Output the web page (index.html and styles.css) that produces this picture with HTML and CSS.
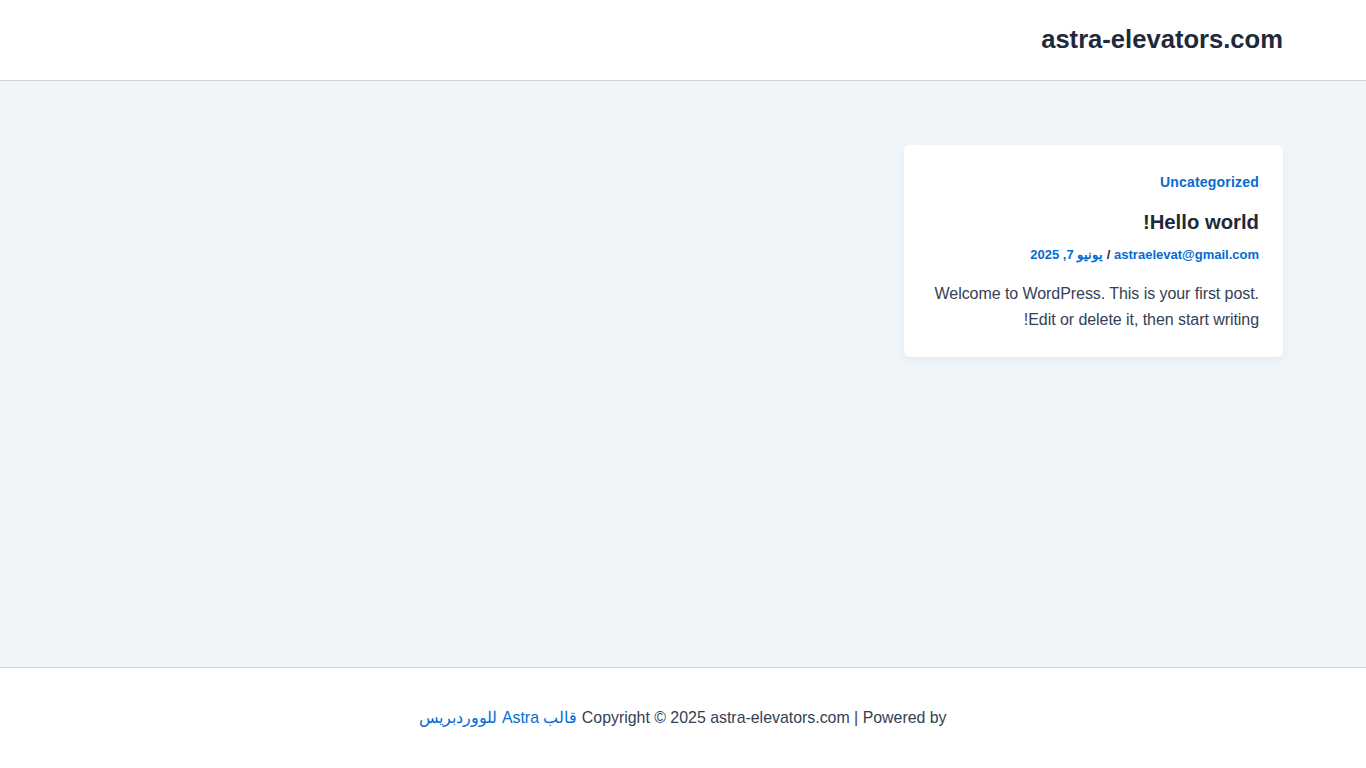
FILE: index.html
```html
<!DOCTYPE html>
<html lang="ar" dir="rtl">
<head>
<meta charset="utf-8">
<title>astra-elevators.com</title>
<link rel="stylesheet" href="styles.css">
</head>
<body>
<header class="site-header">
  <div class="container header-inner">
    <a class="site-title" href="#">astra-elevators.com</a>
  </div>
</header>
<main class="site-main">
  <div class="container posts">
    <article class="post-card">
      <a class="cat" href="#">Uncategorized</a>
      <h2 class="post-title">Hello world!</h2>
      <div class="meta"><a href="#">astraelevat@gmail.com</a> / <a href="#">يونيو 7, 2025</a></div>
      <p class="excerpt">Welcome to WordPress. This is your first post. Edit or delete it, then start writing!</p>
    </article>
  </div>
</main>
<footer class="site-footer">
  <p>Copyright © 2025 astra-elevators.com | Powered by <a href="#">قالب Astra للووردبريس</a></p>
</footer>
</body>
</html>
```
FILE: styles.css
```css
* { box-sizing: border-box; }
html, body { margin: 0; padding: 0; }
body {
  font-family: "Liberation Sans", Arial, "Noto Sans", sans-serif;
  color: #334155;
  background: #f0f5fa;
  min-height: 768px;
  display: flex;
  flex-direction: column;
}
a { text-decoration: none; color: #046bd2; }
.container { width: 1200px; margin: 0 auto; }
.site-header {
  background: #fff;
  height: 81px;
  border-bottom: 1px solid #d1d5db;
}
.header-inner {
  height: 80px;
  display: flex;
  align-items: center;
}
.site-title {
  font-size: 25.6px;
  font-weight: 700;
  color: #1e293b;
  line-height: 1;
  margin-top: 0;
}
.site-main {
  flex: 1;
  padding-top: 64px;
}
.posts {
  display: grid;
  grid-template-columns: repeat(3, 1fr);
  column-gap: 32px;
}
.post-card {
  background: #fff;
  border-radius: 6px;
  box-shadow: 0 4px 10px rgba(30, 41, 59, 0.05);
  padding: 27px 24px 22px;
  height: 212px;
}
.cat {
  display: block;
  font-size: 14px;
  font-weight: 700;
  line-height: 20px;
  letter-spacing: 0.2px;
}
.post-title {
  margin: 17px 0 0;
  font-size: 20.3px;
  font-weight: 700;
  color: #1e293b;
  line-height: 26px;
}
.meta {
  margin-top: 11px;
  font-size: 13px;
  font-weight: 700;
  line-height: 18px;
  color: #1e293b;
}
.meta a { color: #046bd2; }
.excerpt {
  margin: 17px 0 0;
  font-size: 16px;
  line-height: 26px;
  letter-spacing: -0.06px;
}
.site-footer {
  background: #fff;
  border-top: 1px solid #d1d5db;
  height: 101px;
  display: flex;
  align-items: center;
  justify-content: center;
}
.site-footer p {
  margin: 0;
  font-size: 15.9px;
  line-height: 24px;
  padding-top: 0;
}
```
